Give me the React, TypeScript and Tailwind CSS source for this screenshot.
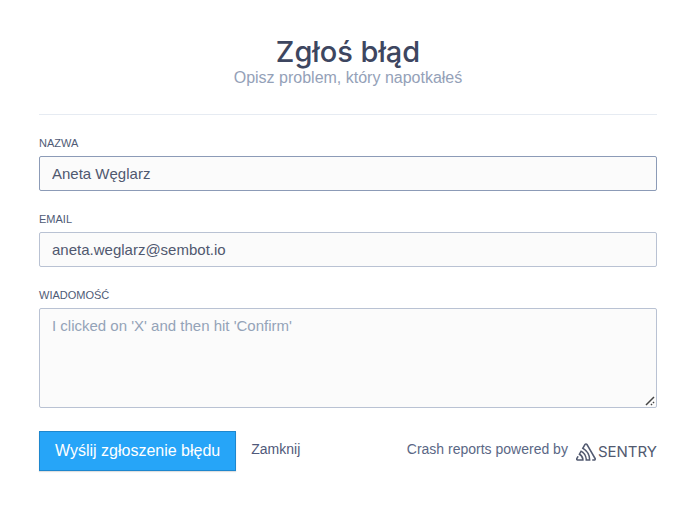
import { SiSentry } from "react-icons/si";

const labelClass = "block mb-[5px] text-[11px] leading-4 uppercase text-[#4f5b76]";
const fieldClass =
  "block w-full rounded-xs border bg-[#fbfbfb] px-3 text-[15px] text-[#50586f] placeholder:text-[#94a3b8] outline-none";

export default function App() {
  return (
    <main className="bg-white pt-9 pr-10 pb-10 pl-[39px] font-['Liberation_Sans',Arial,sans-serif]">
      <form onSubmit={(e) => e.preventDefault()}>
        {/* Heading */}
        <header className="mb-5 border-b border-[#e6ebf2] pb-[26px] text-center">
          <h1 className="font-['Inter',sans-serif] text-[29px] leading-8 font-medium text-[#3d4660]">Zgłoś błąd</h1>
          <p className="text-base leading-5 text-[#94a1b8]">Opisz problem, który napotkałeś</p>
        </header>

        {/* Fields */}
        <div className="mb-5">
          <label htmlFor="name" className={labelClass}>Nazwa</label>
          <input id="name" type="text" defaultValue="Aneta Węglarz" className={`${fieldClass} h-[35px] border-[#8c9bb7]`} />
        </div>
        <div className="mb-5">
          <label htmlFor="email" className={labelClass}>Email</label>
          <input id="email" type="email" defaultValue="aneta.weglarz@sembot.io" className={`${fieldClass} h-[35px] border-[#b9c2d3]`} />
        </div>
        <div className="relative mb-[23px]">
          <label htmlFor="message" className={labelClass}>Wiadomość</label>
          <textarea
            id="message"
            placeholder="I clicked on 'X' and then hit 'Confirm'"
            className={`${fieldClass} h-25 resize-y border-[#b9c2d3] py-[7px] leading-5 [&::-webkit-resizer]:bg-transparent`}
          />
          {/* Resize grip */}
          <svg viewBox="0 0 10 10" className="pointer-events-none absolute right-0.5 bottom-0.5 size-2.5" aria-hidden="true">
            <path d="M1 9 9 1M6 9l1-1M8 7l1-1" stroke="#444" strokeWidth="1.5" fill="none" />
          </svg>
        </div>

        {/* Actions */}
        <div className="flex items-center">
          <button
            type="submit"
            className="h-10 border border-[#1d87ce] bg-[#26a5f8] px-[15px] text-base text-white shadow-[0_1px_1px_rgba(0,0,0,0.12)]"
          >
            Wyślij zgłoszenie błędu
          </button>
          <button type="button" className="ml-[15px] pb-1 text-sm text-[#50597a]">Zamknij</button>
          <p className="ml-auto flex items-center text-sm text-[#5a6785]">
            <span className="pb-1">Crash reports powered by</span>
            <a href="https://sentry.io" className="ml-2 flex items-center gap-0.5 pt-0.5 text-[#525a70]">
              <SiSentry className="size-5" aria-hidden="true" />
              <span className="font-['Inter',sans-serif] text-[15px] leading-5">SENTRY</span>
            </a>
          </p>
        </div>
      </form>
    </main>
  );
}
